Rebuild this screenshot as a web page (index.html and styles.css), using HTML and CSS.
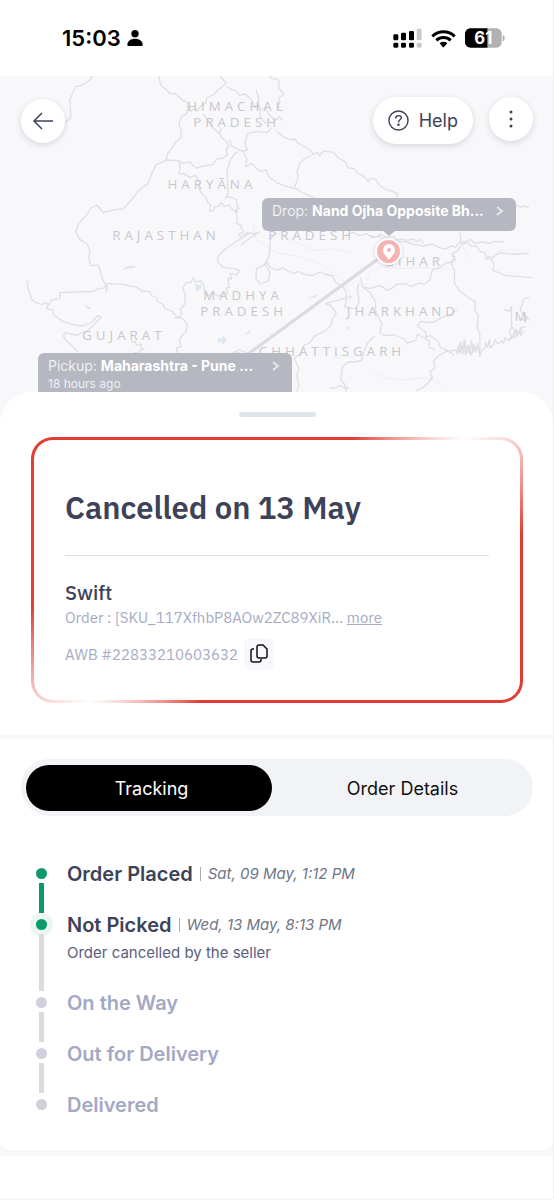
FILE: index.html
```html
<!DOCTYPE html>
<html lang="en">
<head>
    <meta charset="UTF-8">
    <meta name="viewport" content="width=device-width, initial-scale=1.0">
    <title>Order Tracking</title>
    <link rel="stylesheet" href="styles.css">
</head>
<body>

<header class="status-bar">
    <div class="status-time">
        <span>15:03</span>
        <svg width="16" height="18" viewBox="0 0 48 54" aria-hidden="true">
            <circle cx="24" cy="14" r="11"/>
            <path d="M1 48c0-13 11-19 23-19s23 6 23 19c0 2-1 3-3 3H4c-2 0-3-1-3-3z"/>
        </svg>
    </div>
    <div class="status-icons">
        <svg width="29" height="20" viewBox="0 0 87 60" aria-hidden="true">
            <rect x="1" y="19" width="15" height="18" rx="4"/>
            <rect x="24" y="14" width="15" height="23" rx="4"/>
            <rect x="48" y="9" width="15" height="28" rx="4"/>
            <rect x="71" y="2" width="15" height="35" rx="4" fill="#c9c9c9"/>
            <rect x="1" y="44" width="15" height="15" rx="4"/>
            <rect x="24" y="44" width="15" height="15" rx="4"/>
            <rect x="48" y="44" width="15" height="15" rx="4"/>
            <rect x="71" y="44" width="15" height="15" rx="4" fill="#c9c9c9"/>
        </svg>
        <svg width="25" height="19" viewBox="0 0 75 57" aria-hidden="true">
            <g fill="none" stroke="#000" stroke-width="9">
                <path d="M4 22a48 48 0 0 1 67 0"/>
                <path d="M16 34a31 31 0 0 1 43 0"/>
            </g>
            <path d="M26 43a17 17 0 0 1 23 0L39 54q-2 2-4 0z"/>
        </svg>
        <svg width="40" height="20" viewBox="0 0 120 60" aria-label="Battery 61">
            <path d="M18 1h50v58H18C7 59 0 52 0 42V18C0 8 7 1 18 1z"/>
            <path d="M68 1h24c11 0 18 7 18 17v24c0 10-7 17-18 17H68z" fill="#b1b1b1"/>
            <path d="M113 21c8 2 8 17 0 19z" fill="#b1b1b1"/>
            <text x="55" y="48" class="battery-text">61</text>
        </svg>
    </div>
</header>

<section class="map">
    <svg class="map-canvas" viewBox="0 0 1662 948" preserveAspectRatio="xMidYMin slice" aria-hidden="true">
        <!-- lakes and rivers -->
        <g class="water">
            <path d="M254 680q6 12 22 14l-4 6q-16-2-18-20zM655 785l12 3 6-10 4 10 8 2-10 8-2 10-8-10-10 4zM586 622l14 6 8-10-4 20-14 10zM738 772l14-10 4 4-16 12z"/>
            <path d="M925 666l34-12-14 12zM1037 753l14-2-6 14zM1044 658l16 2-10 10zM396 554l24-6M370 582q20-22 40-8" />
        </g>
        <g class="river">
            <path d="M760 440l10 50 60 40 70 12 60 20 70 50 20 40M831 470l60 30 50 24 60-6 60 14M1090 650l20-60 40-20 50 8 70-4 90 6M1120 890q60 30 120 18t100 30M1485 530l20-8h84M1470 560l20-26h98"/>
            <path d="M1380 470l12 50 24 30M1000 850l30-12 40 12"/>
        </g>
        <!-- state borders, north west -->
        <g class="border">
            <path d="M278 0l-4 10-24 17-22 5-13 30-4 10 3 52-19 18"/>
            <path d="M478 0l6 28 20 16 8 10 14-2 20 18 18 10 4 12-8 22-16 10-6 24 8 18-2 20-14 10-10 16-16 22-4 20-30 12-12 24-14 34-28 20-10 16-22 24-12 14-30 4-30 8-12-14-8-8-18 8-12 20-24 26-9 24 12 24 22 14 8 20-3 24 6 20 24 0 10 40 16 26-6 16"/>
            <path d="M562 88l10 18 12-8 8 8 14-18 12-6 4-16 20-10 14-14 24-20-12-14-6-10M682 32l14 8 12 4 12 14 14-4 20 14 14 26 10-10 4 18 14-6 12 18 18 20 14-12 10 12"/>
            <path d="M770 40l8 30-4 20 8 14 0 20 18 20M808 0l10 8 14 2M666 156l-8 16-20-18-10-20-18-20"/>
            <path d="M498 252l38 2 12 8 24-4 8 10 10 8 24-6 26-4 10-16 20-4 14-10-4-18 8-4-6-16-16-14-6-16M690 190l6 20 34 16 14-4-8-20 8-30 28-6 30 4 14-14"/>
            <path d="M538 256l4 18-4 18 18 2 14 10 18-6 12 18-4 16 10 20 14 12 4 14 10 10-4 18 12-2 2-12 14 0 6-12 12 12 12-6 10 14 14 10 2-20-4-20-22-8-10 4 8-14-2-40-2-24 8-30 14-24 12-8"/>
            <path d="M722 394l-14 10 6 24-4 14 12 4 10 22-14 6 4 8 24-12 18 4 16-6-20 12-36 26"/>
            <path d="M734 230l8 20-4 22 20-10 12 14 14 10 16-4 8 20 22 16"/>
        </g>
        <!-- Nepal and the north east -->
        <g class="border">
            <path d="M831 10l8 4-2 22 16 18-16 12 4 12-8 18 10-2M831 165l24 20 16 6 14-2 10 12 22 12 18 12 6 10 12-6 6 10 14-14 30 4 12 16 22 12 8 18 20 4 8 12 20 10 14 16 6-10 14 2 12 18 20 14 22 6 14 6-4 10"/>
            <path d="M935 237l-20 12-14 12-8 26 2 18-10 32M831 320l22 8 26 8 12 2 14 10 30 14 26 10 20 2"/>
            <path d="M1546 390h10l8 4 10-4 14 4M1040 477l20-8 22 10 20-6 16 12 22-4 10 8 20-2 14 8 22-6 16 4 20-4 12 8 10-8 8 14M1110 478l20 6 12-10 18 10 24-2 10 14 28 2 22 8 30 4 24-6 20 10 20 6 16-10 14 4 10-14 18 2 16-12 14 12 24-4 20 4 16-6 26 2M1382 470l2 30 10 6"/>
            <path d="M1390 495l14 6 12 10 14-2 12 18 12 2 10 18 14 4 6 16-4 16 40 16 36 2 42 4M1456 550l14-8 10 2 20-14 34 4 54-2"/>
            <path d="M1385 505l-10 20-18 8 10 18-12 10 10 22 0 40 14 20 20 16 30 20-4 24 12 14-4 36 8 20 0 70"/>
        </g>
        <!-- centre -->
        <g class="border">
            <path d="M322 622l56 4 12 4 18 2 20 14 22 0 8 14 14 6 2 12 16 6 6 14 22 8 12 14 22 10 12 16-4 20-12 12-8 12 4 22-14 4 6 18 20 2 14 20 20 8 16 14"/>
            <path d="M80 614l6 6-2 14 8 20 4 16 14 10 18 6 8-6 12 6 6-14 28-4-2-18 50-2 52-2 14-8 18-2 8-14M146 686l-4 12 16 4 6 16 26 18 30 10 30 4 28-12 16-20 10 6-16 18-24 22-34 14-32-8-6 10 8 14 18 16 18 18"/>
            <path d="M524 726l16 0 6-14-4-12 14-16 2-24-8-24 10-16 14 0 6-14 8 12 16-4 8 12 4 20 10 12 16-8 14 12 14-8 14 0-4-18 10-2-6-28 12 4-4-18 20 4 8-12-14-6-36-4-16-18 2-16 22-22 30-20 40-24M831 470l-18 20-4 50-14 26-24 12-2 30 14 16 24-10 4-24-14-26-10 6"/>
            <path d="M795 568l8-10 8 16 20 8 22-6 12 10 20 6 12-6 20 10 24 2 20-10 14 6 24 6 10 20 22 14 8 14 2 24-6 20 24 6 12-2 8-18-6-40 6-14"/>
            <path d="M1083 605l6 28 24 4 24-8 14 4 10 10 20-8 10-10 26-2 18 8 24-10 16 4 16-14 8-30 18-4 22-16 16-2 12-20M1089 633l22 16 18 30-2 24 20 40-6 28 14 8 30-2 28 12 10 12 26-8 4-18 20 10 20-6 22 16 8 20 20 8 20 14"/>
            <path d="M1044 665l-66 18 16 6 16 22-12 20-4 18-20 18-30 14-14 20-18 8-8 24-20 14 14 30-6 20 6 30-6 20"/>
            <path d="M1125 780l-20 20-12 26-6 26-18 6-24 0-16 14-6 38 12 14 6 24M990 936l20 0 10-8 16 8 12 0M700 830l20-8 26 10M680 840q20-14 44-8"/>
            <path d="M1372 700l-16 14-30 10-18 12-20 4-24-4-10 14 26 20-2 20 12 4-2 20 20 8"/>
        </g>
        <!-- coast -->
        <g class="border">
            <path d="M1250 944l22-10 26-26-6-22 14-10-4-22 18-16 20-12 30-4M1368 820l6 14 2-24 6 22 2-34 6 36 4-40 4 44 8-30 4 26 6-40 4 36 6-20 4 18 4-26 4 24 2-12M1374 832l8-30 6 24 8-34 6 38 6-22 8 30 6-34 6 22"/>
            <path d="M1436 830l8 2 4-10 8-4 2-18 6 14 6-24 2 26 10-10 4-16 8 14 12-10 6 8 4-16 14 8 6-16 12 6 4-18 10 6 4-20 12 2M1512 700l18 6 6-16 0 60-6 20 8 20M1536 750l10 14-6 20 10-24 4 20 8-22 2 20 10-14"/>
            <path d="M1588 664l-16 6-4 16-6 16 14 20 12 10M1568 728l10 12 2-20 8 14"/>
            <path d="M394 800l14-4 2 12 16-4-2 12 10 4-14 4 4 10-18-4-2 10M1300 900l-14 20"/>
        </g>
        <path class="route" d="M1164 528L735 842"/>
        <g class="state">
            <text x="563" y="104">HIMACHAL</text>
            <text x="581" y="153">PRADESH</text>
            <text x="504" y="339">HARYĀNA</text>
            <text x="338" y="492">RAJASTHAN</text>
            <text x="806" y="492">PRADESH</text>
            <text x="611" y="671">MADHYA</text>
            <text x="602" y="719">PRADESH</text>
            <text x="248" y="792">GUJARAT</text>
            <text x="1157" y="571">BIHAR</text>
            <text x="1042" y="720">JHARKHAND</text>
            <text x="778" y="839">CHHATTISGARH</text>
            <text x="1545" y="735">M</text>
        </g>
    </svg>

    <div class="map-pin">
        <svg width="14" height="18" viewBox="0 0 14 18" aria-hidden="true">
            <path fill="#fff" fill-rule="evenodd" d="M7 1a6 6 0 0 0-6 6c0 4 4 7 6 10 2-3 6-6 6-10a6 6 0 0 0-6-6zm0 4a2 2 0 1 1 0 4 2 2 0 0 1 0-4z"/>
        </svg>
    </div>
    <a href="#drop" class="map-tag map-tag-drop">
        <span class="tag-line">Drop: <b>Nand Ojha Opposite Bh...</b></span>
        <svg class="tag-arrow" width="8" height="12" viewBox="0 0 8 12" aria-hidden="true"><path d="M1 2l5 4-5 4"/></svg>
    </a>
    <a href="#pickup" class="map-tag map-tag-pickup">
        <span class="tag-line">Pickup: <b>Maharashtra - Pune ...</b></span>
        <svg class="tag-arrow" width="8" height="12" viewBox="0 0 8 12" aria-hidden="true"><path d="M1 2l5 4-5 4"/></svg>
        <span class="tag-sub">18 hours ago</span>
    </a>

    <nav class="map-nav">
        <button type="button" class="round-btn back-btn" aria-label="Back">
            <svg width="22" height="20" viewBox="0 0 22 20" aria-hidden="true"><path d="M21 10H2M10 2L2 10l8 8"/></svg>
        </button>
        <button type="button" class="help-btn">
            <svg width="21" height="21" viewBox="0 0 22 22" aria-hidden="true">
                <circle cx="11" cy="11" r="10"/>
                <path d="M8 9c0-4 6-4 6-1 0 2-3 2-3 5"/>
                <circle cx="11" cy="15.5" r=".6"/>
            </svg>
            Help
        </button>
        <button type="button" class="round-btn" aria-label="More options">
            <svg class="dots" width="4" height="20" viewBox="0 0 4 20" aria-hidden="true">
                <circle cx="2" cy="3" r="1.5"/><circle cx="2" cy="10" r="1.5"/><circle cx="2" cy="17" r="1.5"/>
            </svg>
        </button>
    </nav>
</section>

<main>
    <section class="sheet">
        <div class="handle"></div>
        <div class="order-card">
            <h1>Cancelled on 13 May</h1>
            <div class="courier">
                <h2>Swift</h2>
                <p>Order : [SKU_117XfhbP8AOw2ZC89XiR... <a href="#more">more</a></p>
                <div class="awb">
                    <span>AWB #22833210603632</span>
                    <button type="button" class="copy-btn" aria-label="Copy AWB number">
                        <svg width="18" height="20" viewBox="0 0 18 20" aria-hidden="true">
                            <path d="M9 1h4l4 4v7a2 2 0 0 1-2 2H9a2 2 0 0 1-2-2V3a2 2 0 0 1 2-2z"/>
                            <path d="M4 5H3a2 2 0 0 0-2 2v9a2 2 0 0 0 2 2h6a2 2 0 0 0 2-2v-1"/>
                        </svg>
                    </button>
                </div>
            </div>
        </div>
    </section>

    <section class="details">
        <div class="tabs">
            <button type="button" class="tab active"><span>Tracking</span></button>
            <button type="button" class="tab"><span>Order Details</span></button>
        </div>
        <ul class="timeline">
            <li class="step done">
                <h3>Order Placed <small>Sat, 09 May, 1:12 PM</small></h3>
            </li>
            <li class="step current">
                <h3>Not Picked <small>Wed, 13 May, 8:13 PM</small></h3>
                <p>Order cancelled by the seller</p>
            </li>
            <li class="step"><h3>On the Way</h3></li>
            <li class="step"><h3>Out for Delivery</h3></li>
            <li class="step"><h3>Delivered</h3></li>
        </ul>
    </section>

    <section class="next-section"></section>
</main>

</body>
</html>
```
FILE: styles.css
```css
* {
    box-sizing: border-box;
}
body {
    font-family: 'Inter', sans-serif;
    background-color: #f8f8fb;
    border-right: 1px solid #efeff2;
    margin: 0;
    color: #3d4259;
}
h1, h2, h3, p, ul {
    margin: 0;
    padding: 0;
}
button {
    border: none;
    font-family: inherit;
    cursor: pointer;
    padding: 0;
}

/* Phone status bar */
.status-bar {
    display: flex;
    justify-content: space-between;
    align-items: center;
    height: 76px;
    padding: 0 48px 0 62px;
    background: #fff;
}
.status-time {
    display: flex;
    align-items: center;
    gap: 6px;
    font-size: 22px;
    font-weight: 600;
    color: #000;
}
.status-icons {
    display: flex;
    align-items: center;
    gap: 9px;
}
.battery-text {
    font-size: 50px;
    font-weight: 700;
    fill: #fff;
    text-anchor: middle;
}

/* Map */
.map {
    position: relative;
    height: 316px;
    overflow: hidden;
}
.map-canvas {
    position: absolute;
    top: 0;
    left: 0;
    width: 100%;
    height: 100%;
}
.border {
    fill: none;
    stroke: #dfdfe5;
    stroke-width: 4;
    stroke-linejoin: round;
}
.water {
    fill: #dde8f2;
}
.river {
    fill: none;
    stroke: #ebf0f5;
    stroke-width: 3;
}
.route {
    stroke: #dbdce3;
    stroke-width: 10;
}
.state {
    font-family: 'Open Sans', sans-serif;
    font-size: 40px;
    letter-spacing: 12px;
    fill: #c7c7cd;
}
.map-nav {
    position: relative;
    display: flex;
    align-items: flex-start;
    gap: 16px;
    padding: 21px 20px 0 21px;
}
.round-btn,
.help-btn {
    display: flex;
    align-items: center;
    justify-content: center;
    background: #fff;
    box-shadow: 0 2px 6px rgba(40, 40, 70, 0.16);
}
.round-btn {
    width: 44px;
    height: 44px;
    border-radius: 50%;
}
.back-btn {
    margin: 2px auto 0 0;
}
.help-btn {
    gap: 10px;
    height: 47px;
    padding: 0 15px;
    border-radius: 24px;
    font-size: 18px;
    color: #3d4259;
}
.map-nav svg {
    fill: none;
    stroke: #3d4259;
    stroke-width: 1.5;
}
.map-nav .dots {
    fill: #3d4259;
    stroke: none;
}
.map-tag {
    position: absolute;
    display: grid;
    grid-template-columns: 1fr auto;
    align-content: start;
    align-items: center;
    width: 254px;
    padding: 2px 12px 0 10px;
    border-radius: 6px;
    background: #b6b8c1;
    color: #eeeff2;
    text-decoration: none;
}
.map-tag b {
    font-weight: 700;
    color: #fff;
}
.map-tag-drop {
    top: 122px;
    left: 262px;
    height: 33px;
}
.map-tag-drop::after {
    content: '';
    position: absolute;
    top: 100%;
    left: 121px;
    border: 6px solid transparent;
    border-top: 5px solid #b6b8c1;
}
.map-tag-pickup {
    top: 277px;
    left: 38px;
    height: 48px;
}
.tag-line {
    font-size: 14px;
    line-height: 22px;
    white-space: nowrap;
}
.tag-sub {
    font-size: 12px;
    line-height: 14px;
}
.tag-arrow {
    fill: none;
    stroke: #e6e7eb;
    stroke-width: 2;
}
.map-pin {
    position: absolute;
    top: 162px;
    left: 375px;
    display: flex;
    align-items: center;
    justify-content: center;
    width: 27px;
    height: 27px;
    border: 2px solid #fff;
    border-radius: 50%;
    background: #f5b3b2;
    box-shadow: 0 1px 4px rgba(40, 40, 70, 0.15);
}

/* Summary sheet */
.sheet {
    background: #fff;
    border-radius: 32px 32px 0 0;
    padding: 20px 30px 32px 31px;
}
.handle {
    width: 77px;
    height: 5px;
    margin: 0 auto 20px;
    border-radius: 3px;
    background: #dfe3eb;
}
.order-card {
    font-family: 'IBM Plex Sans', 'Noto Sans', sans-serif;
    padding: 48px 31px 30px;
    border: 3px solid transparent;
    border-radius: 22px;
    background:
        linear-gradient(#fff, #fff) padding-box,
        conic-gradient(#e23c34 30deg, #fff 55deg, #e23c34 82deg 210deg, #fff 235deg, #e23c34 262deg) border-box;
}
.order-card h1 {
    padding-bottom: 27px;
    border-bottom: 1px solid #dfe0e5;
    font-size: 31px;
    font-weight: 600;
    line-height: 40px;
}
.courier {
    padding-top: 23px;
    font-size: 15px;
    color: #a6abc3;
}
.courier h2 {
    font-size: 20px;
    font-weight: 500;
    line-height: 28px;
    color: #3d4259;
}
.courier p {
    line-height: 22px;
}
.courier a {
    color: inherit;
}
.awb {
    display: flex;
    align-items: center;
    gap: 6px;
    margin-top: 9px;
}
.copy-btn {
    display: flex;
    align-items: center;
    justify-content: center;
    width: 30px;
    height: 32px;
    border-radius: 6px;
    background: #f8f8fc;
}
.copy-btn svg {
    fill: none;
    stroke: #111;
    stroke-width: 1.5;
}

/* Tabs and timeline */
.details {
    margin-top: 4px;
    padding: 20px 20px 33px 21px;
    border-radius: 0 0 10px 10px;
    background: #fff;
}
.tabs {
    display: flex;
    padding: 6px 5px 5px;
    border-radius: 29px;
    background: #f2f3f6;
}
.tab {
    position: relative;
    flex: 1;
    height: 46px;
    background: transparent;
    font-size: 18px;
    color: #111;
}
.tab span {
    position: relative;
}
.tab.active {
    color: #fff;
}
/* black pill behind the selected label */
.tab.active::before {
    content: '';
    position: absolute;
    inset: 0 5px 0 0;
    border-radius: 23px;
    background: #000;
}
.timeline {
    list-style: none;
    margin-top: 46px;
}
.step {
    position: relative;
    min-height: 51px;
    padding-left: 46px;
    color: #a3a8c3;
}
.step h3 {
    display: flex;
    align-items: center;
    gap: 7px;
    font-size: 20px;
    font-weight: 600;
    line-height: 24px;
}
.step small {
    padding-left: 7px;
    border-left: 1px solid #a9acb6;
    font-size: 15px;
    font-style: italic;
    font-weight: 400;
    line-height: 14px;
    color: #6f7484;
}
.step p {
    margin-top: 6px;
    font-size: 15px;
    line-height: 20px;
    color: #595e7c;
}
/* dot */
.step::before {
    content: '';
    position: absolute;
    top: 6px;
    left: 15px;
    width: 11px;
    height: 11px;
    border-radius: 50%;
    background: #d0d1db;
}
/* line down to the next dot */
.step::after {
    content: '';
    position: absolute;
    top: 21px;
    bottom: 0;
    left: 18px;
    width: 5px;
    background: #dbdbdb;
}
.step:last-child {
    min-height: 0;
}
.step:last-child::after {
    display: none;
}
.done,
.current {
    color: #3d4259;
}
.done::before,
.current::before,
.done::after {
    background: #0c9b68;
}
.current {
    min-height: 78px;
}
.current::before {
    box-shadow: 0 0 0 6px #e9f6f1;
}
.next-section {
    height: 42px;
    margin-top: 6px;
    background: #fff;
}
```
